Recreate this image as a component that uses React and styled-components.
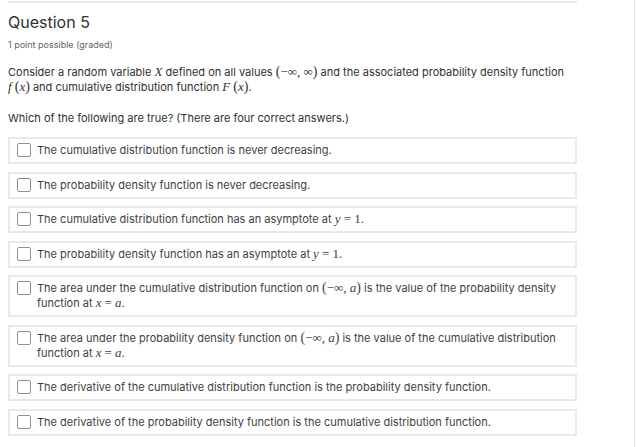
import React from "react";
import styled, { createGlobalStyle } from "styled-components";

const Global = createGlobalStyle`
  html, body { margin: 0; padding: 0; background: #fff; }
  body { font-family: Inter, "Noto Sans", sans-serif; color: #313131; }
`;

const Page = styled.div`
  width: 634px;
  height: 447px;
  border-right: 1px solid #e6e6e6;
  box-sizing: content-box;
  overflow: hidden;
`;

const Column = styled.div`
  width: 569px;
  margin-left: 8px;
  padding-top: 1px;
`;

const Rule = styled.div`
  height: 2px;
  background: #e8e8e8;
`;

const Title = styled.h2`
  margin: 9px 0 0;
  font-size: 16px;
  line-height: 20px;
  font-weight: 400;
  color: #313131;
`;

const Meta = styled.div`
  margin-top: 7px;
  font-size: 9px;
  line-height: 12px;
  color: #646464;
`;

const Para = styled.p`
  margin: ${(p) => p.$top || 0}px 0 0;
  font-size: 11px;
  line-height: 15px;
  color: #313131;
`;

const M = styled.span`
  font-family: "Liberation Serif", "DejaVu Serif", serif;
  font-style: ${(p) => (p.$up ? "normal" : "italic")};
  font-size: 13px;
  line-height: 0;
`;

const Paren = styled.span`
  font-family: "Liberation Serif", "DejaVu Serif", serif;
  font-size: 14px;
  line-height: 0;
`;

const NoWrap = styled.span`
  white-space: nowrap;
`;

const Options = styled.div`
  margin-top: 11px;
  display: flex;
  flex-direction: column;
  gap: 7.5px;
`;

const Option = styled.label`
  display: flex;
  align-items: flex-start;
  border: 2px solid #e9e9e9;
  padding: 4px 8px 4px 7px;
  font-size: 11px;
  line-height: 15px;
  color: #414141;
`;

const Box = styled.span`
  flex: none;
  width: 12px;
  height: 12px;
  border: 1px solid #8f8f8f;
  border-radius: 2px;
  margin-right: 6px;
  background: #fff;
`;

const Text = styled.span`
  flex: 1;
`;

const inf = "\u221E";
const minus = "\u2212";

const Interval = ({ end }) => (
  <NoWrap>
    <Paren>(</Paren>
    <M $up>{minus}{inf}, </M>
    {end === "a" ? <M>a</M> : <M $up>{inf}</M>}
    <Paren>)</Paren>
  </NoWrap>
);

const Fn = ({ name }) => (
  <NoWrap>
    <M>{name}</M> <Paren>(</Paren><M>x</M><Paren>)</Paren>
  </NoWrap>
);

const options = [
  <>The cumulative distribution function is never decreasing.</>,
  <>The probability density function is never decreasing.</>,
  <>The cumulative distribution function has an asymptote at <NoWrap><M>y</M> <M $up>= 1</M></NoWrap>.</>,
  <>The probability density function has an asymptote at <NoWrap><M>y</M> <M $up>= 1</M></NoWrap>.</>,
  <>The area under the cumulative distribution function on <Interval end="a" /> is the value of the probability density function at <NoWrap><M>x</M> <M $up>=</M> <M>a</M></NoWrap>.</>,
  <>The area under the probability density function on <Interval end="a" /> is the value of the cumulative distribution function at <NoWrap><M>x</M> <M $up>=</M> <M>a</M></NoWrap>.</>,
  <>The derivative of the cumulative distribution function is the probability density function.</>,
  <>The derivative of the probability density function is the cumulative distribution function.</>,
];

export default function App() {
  return (
    <Page>
      <Global />
      <Column>
        <Rule />
        <Title>Question 5</Title>
        <Meta>1 point possible (graded)</Meta>
        <Para $top={14}>
          Consider a random variable <M>X</M> defined on all values <Interval end="inf" /> and the associated probability density function <Fn name="f" /> and cumulative distribution function <Fn name="F" />.
        </Para>
        <Para $top={16}>Which of the following are true? (There are four correct answers.)</Para>
        <Options>
          {options.map((o, i) => (
            <Option key={i}>
              <Box />
              <Text>{o}</Text>
            </Option>
          ))}
        </Options>
      </Column>
    </Page>
  );
}
